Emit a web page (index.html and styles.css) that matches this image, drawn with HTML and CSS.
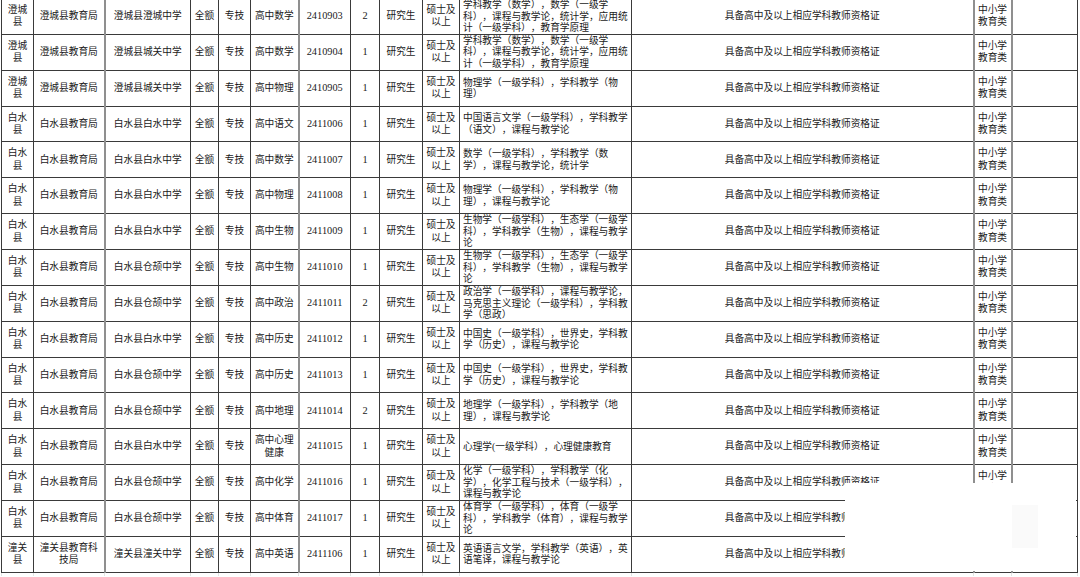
FILE: index.html
```html
<!DOCTYPE html>
<html lang="zh-CN">
<head>
<meta charset="utf-8">
<title>岗位表</title>
<link rel="stylesheet" href="styles.css">
</head>
<body>
<table class="sheet">
<colgroup>
<col style="width:32px"><col style="width:71px"><col style="width:86px"><col style="width:28px"><col style="width:32px"><col style="width:48px"><col style="width:52px"><col style="width:29px"><col style="width:43px"><col style="width:37px"><col style="width:172px"><col style="width:342px"><col style="width:38px"><col style="width:66px">
</colgroup>
<tbody>
<tr><td>澄城<br>县</td><td>澄城县教育局</td><td class="gl">澄城县澄城中学</td><td>全额</td><td>专技</td><td>高中数学</td><td class="code gl">2410903</td><td class="num">2</td><td>研究生</td><td>硕士及<br>以上</td><td class="major">学科教学（数学），数学（一级学<br>科），课程与教学论，统计学，应用统<br>计（一级学科），教育学原理</td><td>具备高中及以上相应学科教师资格证</td><td class="gl">中小学<br>教育类</td><td class="gl"></td></tr>
<tr><td>澄城<br>县</td><td>澄城县教育局</td><td class="gl">澄城县城关中学</td><td>全额</td><td>专技</td><td>高中数学</td><td class="code gl">2410904</td><td class="num">1</td><td>研究生</td><td>硕士及<br>以上</td><td class="major">学科教学（数学），数学（一级学<br>科），课程与教学论，统计学，应用统<br>计（一级学科），教育学原理</td><td>具备高中及以上相应学科教师资格证</td><td class="gl">中小学<br>教育类</td><td class="gl"></td></tr>
<tr><td>澄城<br>县</td><td>澄城县教育局</td><td class="gl">澄城县城关中学</td><td>全额</td><td>专技</td><td>高中物理</td><td class="code gl">2410905</td><td class="num">1</td><td>研究生</td><td>硕士及<br>以上</td><td class="major">物理学（一级学科），学科教学（物<br>理）</td><td>具备高中及以上相应学科教师资格证</td><td class="gl">中小学<br>教育类</td><td class="gl"></td></tr>
<tr><td>白水<br>县</td><td>白水县教育局</td><td class="gl">白水县白水中学</td><td>全额</td><td>专技</td><td>高中语文</td><td class="code gl">2411006</td><td class="num">1</td><td>研究生</td><td>硕士及<br>以上</td><td class="major">中国语言文学（一级学科），学科教学<br>（语文），课程与教学论</td><td>具备高中及以上相应学科教师资格证</td><td class="gl">中小学<br>教育类</td><td class="gl"></td></tr>
<tr><td>白水<br>县</td><td>白水县教育局</td><td class="gl">白水县白水中学</td><td>全额</td><td>专技</td><td>高中数学</td><td class="code gl">2411007</td><td class="num">1</td><td>研究生</td><td>硕士及<br>以上</td><td class="major">数学（一级学科），学科教学（数<br>学），课程与教学论，统计学</td><td>具备高中及以上相应学科教师资格证</td><td class="gl">中小学<br>教育类</td><td class="gl"></td></tr>
<tr><td>白水<br>县</td><td>白水县教育局</td><td class="gl">白水县白水中学</td><td>全额</td><td>专技</td><td>高中物理</td><td class="code gl">2411008</td><td class="num">1</td><td>研究生</td><td>硕士及<br>以上</td><td class="major">物理学（一级学科），学科教学（物<br>理），课程与教学论</td><td>具备高中及以上相应学科教师资格证</td><td class="gl">中小学<br>教育类</td><td class="gl"></td></tr>
<tr><td>白水<br>县</td><td>白水县教育局</td><td class="gl">白水县白水中学</td><td>全额</td><td>专技</td><td>高中生物</td><td class="code gl">2411009</td><td class="num">1</td><td>研究生</td><td>硕士及<br>以上</td><td class="major">生物学（一级学科），生态学（一级学<br>科），学科教学（生物），课程与教学<br>论</td><td>具备高中及以上相应学科教师资格证</td><td class="gl">中小学<br>教育类</td><td class="gl"></td></tr>
<tr><td>白水<br>县</td><td>白水县教育局</td><td class="gl">白水县仓颉中学</td><td>全额</td><td>专技</td><td>高中生物</td><td class="code gl">2411010</td><td class="num">1</td><td>研究生</td><td>硕士及<br>以上</td><td class="major">生物学（一级学科），生态学（一级学<br>科），学科教学（生物），课程与教学<br>论</td><td>具备高中及以上相应学科教师资格证</td><td class="gl">中小学<br>教育类</td><td class="gl"></td></tr>
<tr><td>白水<br>县</td><td>白水县教育局</td><td class="gl">白水县仓颉中学</td><td>全额</td><td>专技</td><td>高中政治</td><td class="code gl">2411011</td><td class="num">2</td><td>研究生</td><td>硕士及<br>以上</td><td class="major">政治学（一级学科），课程与教学论，<br>马克思主义理论（一级学科），学科教<br>学（思政）</td><td>具备高中及以上相应学科教师资格证</td><td class="gl">中小学<br>教育类</td><td class="gl"></td></tr>
<tr><td>白水<br>县</td><td>白水县教育局</td><td class="gl">白水县白水中学</td><td>全额</td><td>专技</td><td>高中历史</td><td class="code gl">2411012</td><td class="num">1</td><td>研究生</td><td>硕士及<br>以上</td><td class="major">中国史（一级学科），世界史，学科教<br>学（历史），课程与教学论</td><td>具备高中及以上相应学科教师资格证</td><td class="gl">中小学<br>教育类</td><td class="gl"></td></tr>
<tr><td>白水<br>县</td><td>白水县教育局</td><td class="gl">白水县仓颉中学</td><td>全额</td><td>专技</td><td>高中历史</td><td class="code gl">2411013</td><td class="num">1</td><td>研究生</td><td>硕士及<br>以上</td><td class="major">中国史（一级学科），世界史，学科教<br>学（历史），课程与教学论</td><td>具备高中及以上相应学科教师资格证</td><td class="gl">中小学<br>教育类</td><td class="gl"></td></tr>
<tr><td>白水<br>县</td><td>白水县教育局</td><td class="gl">白水县仓颉中学</td><td>全额</td><td>专技</td><td>高中地理</td><td class="code gl">2411014</td><td class="num">2</td><td>研究生</td><td>硕士及<br>以上</td><td class="major">地理学（一级学科），学科教学（地<br>理），课程与教学论</td><td>具备高中及以上相应学科教师资格证</td><td class="gl">中小学<br>教育类</td><td class="gl"></td></tr>
<tr><td>白水<br>县</td><td>白水县教育局</td><td class="gl">白水县白水中学</td><td>全额</td><td>专技</td><td>高中心理<br>健康</td><td class="code gl">2411015</td><td class="num">1</td><td>研究生</td><td>硕士及<br>以上</td><td class="major">心理学(一级学科），心理健康教育</td><td>具备高中及以上相应学科教师资格证</td><td class="gl">中小学<br>教育类</td><td class="gl"></td></tr>
<tr><td>白水<br>县</td><td>白水县教育局</td><td class="gl">白水县仓颉中学</td><td>全额</td><td>专技</td><td>高中化学</td><td class="code gl">2411016</td><td class="num">1</td><td>研究生</td><td>硕士及<br>以上</td><td class="major">化学（一级学科），学科教学（化<br>学），化学工程与技术（一级学科），<br>课程与教学论</td><td>具备高中及以上相应学科教师资格证</td><td class="gl">中小学<br>教育类</td><td class="gl"></td></tr>
<tr><td>白水<br>县</td><td>白水县教育局</td><td class="gl">白水县仓颉中学</td><td>全额</td><td>专技</td><td>高中体育</td><td class="code gl">2411017</td><td class="num">1</td><td>研究生</td><td>硕士及<br>以上</td><td class="major">体育学（一级学科），体育（一级学<br>科），学科教学（体育），课程与教学<br>论</td><td>具备高中及以上相应学科教师资格证</td><td class="gl">中小学<br>教育类</td><td class="gl"></td></tr>
<tr><td>潼关<br>县</td><td>潼关县教育科<br>技局</td><td class="gl">潼关县潼关中学</td><td>全额</td><td>专技</td><td>高中英语</td><td class="code gl">2411106</td><td class="num">1</td><td>研究生</td><td>硕士及<br>以上</td><td class="major">英语语言文学，学科教学（英语），英<br>语笔译，课程与教学论</td><td>具备高中及以上相应学科教师资格证</td><td class="gl">中小学<br>教育类</td><td class="gl"></td></tr>
<tr class="ghost"><td></td><td></td><td></td><td></td><td></td><td></td><td></td><td></td><td></td><td></td><td></td><td></td><td></td><td></td></tr>
</tbody>
</table>
<div class="mask"><div class="ph"></div></div>
</body>
</html>
```
FILE: styles.css
```css
html, body {
  margin: 0;
  padding: 0;
  overflow: hidden;
  background: #ffffff;
}

body {
  width: 1080px;
  height: 577px;
  position: relative;
  font-family: "Liberation Serif", "Noto Sans CJK SC", serif;
  font-size: 9.7px;
  color: #1a1a1a;
  text-spacing-trim: space-all;
}

.sheet {
  border-collapse: collapse;
  table-layout: fixed;
  width: 1076px;
  margin: -2px 0 0 1px;
}

.sheet tr {
  height: 35.87px;
}

.sheet td {
  border: 1px solid #3a3a3a;
  padding: 0 1px;
  text-align: center;
  vertical-align: middle;
  line-height: 12.5px;
  white-space: nowrap;
  overflow: hidden;
}

.sheet td.gl {
  border-left: 2px solid #8f8f8f;
}

.sheet td.code {
  font-size: 10.3px;
}

.sheet td.num {
  font-size: 10.3px;
}

.sheet td.major {
  text-align: left;
  padding-left: 3px;
  line-height: 11.6px;
}

.sheet tr.ghost {
  height: 4px;
}

.sheet tr.ghost td {
  border-color: #e4e4e4;
  border-top: 1px solid #8a8a8a;
  border-bottom: 0;
}

.mask {
  position: absolute;
  left: 845px;
  top: 483px;
  width: 231px;
  height: 88px;
  background: #ffffff;
  box-sizing: border-box;
  padding: 22px 0 0 167px;
}

.ph {
  width: 26px;
  height: 43px;
  background: #fafafa;
}
```
